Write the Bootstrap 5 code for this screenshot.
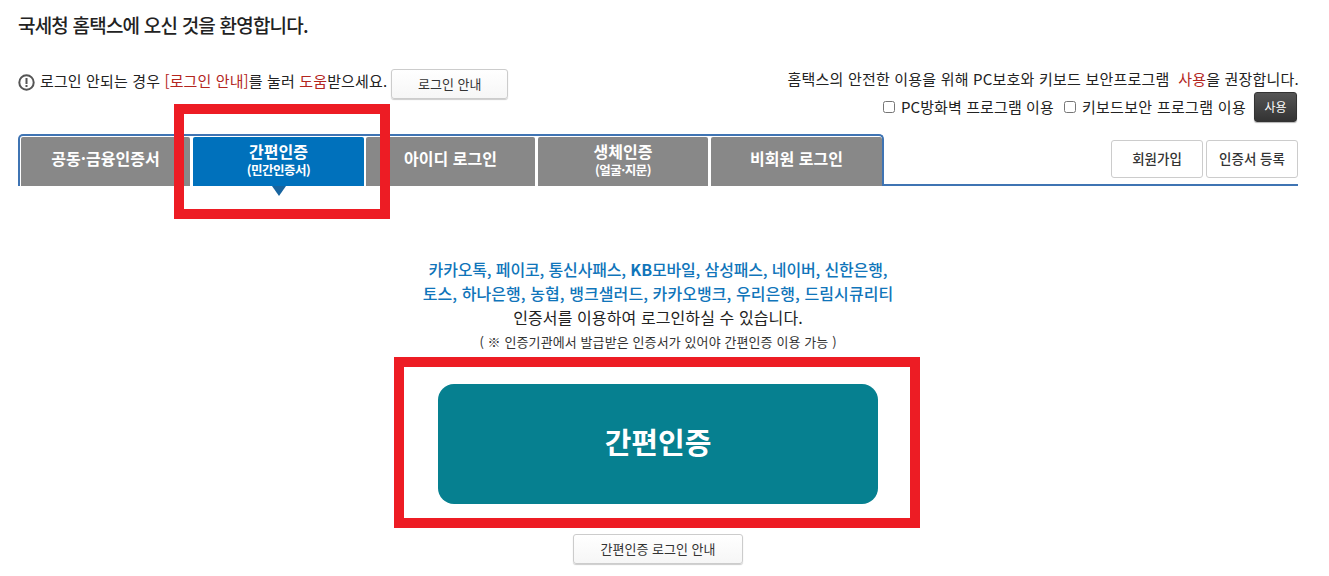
<!DOCTYPE html>
<html lang="ko">
<head>
<meta charset="utf-8">
<title>국세청 홈택스</title>
<link href="https://cdn.jsdelivr.net/npm/bootstrap@5.3.0/dist/css/bootstrap.min.css" rel="stylesheet">
<style>
html,body{height:576px;overflow:hidden;background:#fff}
body{font-family:"Noto Sans CJK KR","Noto Sans",sans-serif;font-size:15px;color:#222;position:relative}
.page-wrap{width:1280px;margin-left:18px}
.welcome{font-size:19px;font-weight:500;letter-spacing:-.8px;line-height:26px;padding-top:12px;margin:0;height:69px;color:#222}
.info-row{height:65px}
.info-left{height:30px;font-size:15px;letter-spacing:.13px;gap:4px}
.info-left .msg{padding-bottom:5px}
.info-icon{width:17px;height:17px;flex:none;margin-bottom:3px;margin-right:1px}
.red{color:#b3261e}
.ghost-btn{background:linear-gradient(#fff,#f6f6f6);border:1px solid #ccc;border-radius:3px;box-shadow:0 1px 1px rgba(0,0,0,.2);font-size:13px;color:#333;padding:0;line-height:28px;height:30px}
.guide-btn{width:117px}
.info-right{font-size:15px;letter-spacing:.1px}
.first-line{height:23px;line-height:19px;letter-spacing:.2px;margin-right:-1px}
.check-line{height:30px}
.check-line input{width:12px;height:12px;margin:0 6px 0 0;accent-color:#555}
.check-line label{margin-right:10px;display:flex;align-items:center}
.check-line label.second-label{margin-right:8px;letter-spacing:.3px}
.use-btn{width:43px;height:30px;background:linear-gradient(#555,#333);color:#fff;font-size:12px;border:1px solid #333;border-radius:3px;padding:0;box-shadow:0 1px 1px rgba(0,0,0,.3);margin-right:1px}
.tabs-row{height:52px;position:relative;border-bottom:2px solid #3f74b3}
.tab-strip{width:866px;height:52px;border:2px solid #3f74b3;border-bottom:0;border-radius:5px 5px 0 0;background:#fff;gap:3px;padding:1px 0 0 1px;margin-bottom:-2px;position:relative;z-index:1}
.tab-item{background:#888;color:#fff;font-weight:700;font-size:16px;text-align:center;display:flex;flex-direction:column;justify-content:center;width:170px;line-height:19px;height:49px;border-radius:2px 2px 0 0;position:relative;padding-bottom:6px}
.tab-item.first{width:169px}
.tab-item.third{width:169px}
.tab-item.last{flex:1}
.tab-item.two-line{padding-bottom:3px}
.tab-item small{font-size:12.5px;font-weight:700;line-height:17px;letter-spacing:-.5px}
.tab-item.active-tab{background:#0071bc;width:171px;margin-right:-1px}
.tab-item.active-tab::after{content:"";position:absolute;left:50%;margin-left:-7px;top:100%;border:7px solid transparent;border-top:10px solid #17649f;border-bottom:0}
.side-btns{gap:3px;padding-bottom:6px;align-items:flex-end}
.side-btn{height:38px;border:1px solid #ccc;border-radius:3px;background:#fff;font-size:13.5px;font-weight:500;color:#333;padding:0 0 2px;width:92px}
.main-area{padding-top:71px;text-align:center}
.blue-list{font-size:16px;font-weight:500;color:#1075ba;line-height:24px;letter-spacing:-.15px}
.line-wide{letter-spacing:.07px}
.note1{font-size:16px;line-height:25px;color:#222;letter-spacing:.1px}
.note2{font-size:13px;line-height:24px;color:#333;letter-spacing:.1px}
.simple-btn{display:block;width:440px;height:120px;margin:30px auto 0;background:#068090;border:0;border-radius:16px;color:#fff;font-size:29px;font-weight:700;padding:0 0 5px}
.sub-guide{width:170px;height:30px;margin-top:30px;display:inline-block}
.red-frame{position:absolute;border:10px solid #ed1c24;pointer-events:none;z-index:5}
.frame-a{left:174px;top:104px;width:216px;height:115px}
.frame-b{left:394px;top:357px;width:526px;height:171px}
</style>
</head>
<body>
<div class="page-wrap">
  <h1 class="welcome">국세청 홈택스에 오신 것을 환영합니다.</h1>
  <div class="info-row d-flex justify-content-between align-items-start">
    <div class="info-left d-flex align-items-center">
      <svg class="info-icon" viewBox="0 0 17 17"><circle cx="8.5" cy="8.5" r="7.2" fill="none" stroke="#555" stroke-width="2"/><rect x="7.5" y="4" width="2" height="6" fill="#555"/><rect x="7.5" y="11" width="2" height="2" fill="#555"/></svg>
      <span class="msg">로그인 안되는 경우 <span class="red">[로그인 안내]</span>를 눌러 <span class="red">도움</span>받으세요.</span>
      <button type="button" class="btn ghost-btn guide-btn">로그인 안내</button>
    </div>
    <div class="info-right text-end">
      <div class="first-line">홈택스의 안전한 이용을 위해 PC보호와 키보드 보안프로그램 &nbsp;<span class="red">사용</span>을 권장합니다.</div>
      <div class="check-line d-flex justify-content-end align-items-center">
        <label><input type="checkbox">PC방화벽 프로그램 이용</label>
        <label class="second-label"><input type="checkbox">키보드보안 프로그램 이용</label>
        <button type="button" class="btn use-btn">사용</button>
      </div>
    </div>
  </div>
  <div class="tabs-row d-flex justify-content-between">
    <div class="tab-strip d-flex">
      <div class="tab-item first">공동·금융인증서</div>
      <div class="tab-item active-tab two-line">간편인증<small>(민간인증서)</small></div>
      <div class="tab-item third">아이디 로그인</div>
      <div class="tab-item two-line">생체인증<small>(얼굴·지문)</small></div>
      <div class="tab-item last">비회원 로그인</div>
    </div>
    <div class="side-btns d-flex">
      <button type="button" class="btn side-btn">회원가입</button>
      <button type="button" class="btn side-btn">인증서 등록</button>
    </div>
  </div>
  <div class="main-area">
    <div class="blue-list">카카오톡, 페이코, 통신사패스, <b>KB</b>모바일, 삼성패스, 네이버, 신한은행,<br><span class="line-wide">토스, 하나은행, 농협, 뱅크샐러드, 카카오뱅크, 우리은행, 드림시큐리티</span></div>
    <div class="note1">인증서를 이용하여 로그인하실 수 있습니다.</div>
    <div class="note2">( ※ 인증기관에서 발급받은 인증서가 있어야 간편인증 이용 가능 )</div>
    <button type="button" class="btn simple-btn">간편인증</button>
    <button type="button" class="btn ghost-btn sub-guide">간편인증 로그인 안내</button>
  </div>
</div>
<div class="red-frame frame-a"></div>
<div class="red-frame frame-b"></div>
</body>
</html>
